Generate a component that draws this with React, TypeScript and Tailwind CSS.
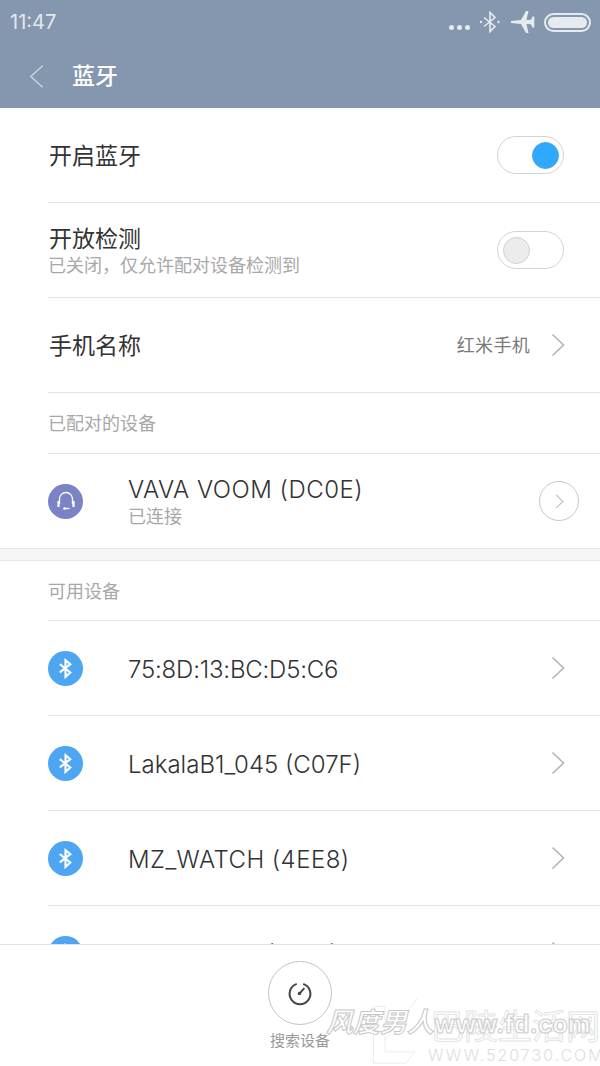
import React from 'react';

const font = "font-['Inter','Noto_Sans_CJK_SC',sans-serif]";

const BluetoothGlyph = ({ className }: { className?: string }) => (
  <svg viewBox="0 0 24 24" fill="none" stroke="currentColor" strokeWidth="2.4" className={className}>
    <path d="M5.5 7 17.5 16.5 12 21.5V2.5L17.5 7 5.5 16.5" />
  </svg>
);

const Toggle = ({ on }: { on?: boolean }) => (
  <div className={`flex h-[38px] w-[67px] items-center rounded-full border border-[#d4d4d4] bg-white ${on ? 'justify-end pr-[4px]' : 'justify-start pl-[5px]'}`}>
    {on ? (
      <div className="size-[27px] rounded-full bg-[#2fa9fb] border border-[#46a6e6]" />
    ) : (
      <div className="size-[27px] rounded-full bg-[#ececec] border border-[#d0d0d0]" />
    )}
  </div>
);

const Arrow = () => (
  <svg viewBox="0 0 14 24" fill="none" stroke="#b4b4b4" strokeWidth="1.6" className="w-[14px] h-[24px]">
    <path d="M1.5 1.5 12.5 12 1.5 22.5" />
  </svg>
);

const SectionTitle = ({ title, className }: { title: string; className: string }) => (
  <div className={`${className} flex items-center ml-[48px] border-b border-[#e3e3e3] text-[18px] text-[#a8a8a8]`}>{title}</div>
);

const DeviceRow = ({ name, tracking }: { name: string; tracking?: string }) => (
  <div className="ml-[48px] h-[95px] shrink-0 flex items-center border-b border-[#e3e3e3] pr-[35px]">
    <div className="size-[35px] rounded-full bg-[#4ea6f3] flex items-center justify-center text-white">
      <BluetoothGlyph className="w-[21px] h-[21px]" />
    </div>
    <div className={`ml-[45px] flex-1 pt-[3px] text-[24px] font-light text-[#333333] ${tracking ?? ''}`}>{name}</div>
    <Arrow />
  </div>
);

export default function App() {
  return (
    <div className={`${font} w-[600px] h-[1066px] bg-white flex flex-col overflow-hidden relative`}>
      {/* status + title bar */}
      <div className="h-[108px] shrink-0 bg-[#8497ae] flex flex-col">
        <div className="h-[44px] flex items-center justify-between pl-[10px] pr-[9px]">
          <span className="text-[20px] text-[#e3e8ee]">11:47</span>
          <div className="flex items-center text-[#e6ebf0]">
            <div className="flex gap-[3px] mt-[10px] mr-[8px]">
              <span className="size-[5px] rounded-full bg-current" />
              <span className="size-[5px] rounded-full bg-current" />
              <span className="size-[5px] rounded-full bg-current" />
            </div>
            <svg viewBox="0 0 24 24" fill="none" stroke="currentColor" strokeWidth="1.6" className="w-[24px] h-[26px] mr-[9px]">
              <path d="M6 7.5 17 16.5 12 21.5V2.5l5 5L6 16.5" />
              <circle cx="3" cy="12" r="1.2" fill="currentColor" stroke="none" />
              <circle cx="20.5" cy="12" r="1.2" fill="currentColor" stroke="none" />
            </svg>
            <svg viewBox="0 0 24 24" fill="currentColor" className="w-[24px] h-[24px] mr-[9px]">
              <path d="M0 11 10 10 15 1h2.500L15.500 10l4.500-.2L21.500 6.500h1.800v11h-1.800L20 14.200 15.500 14l2 9H15l-5-9L0 13z" />
            </svg>
            <div className="w-[47px] h-[19px] rounded-full border-2 border-[#e6ebf0] p-[2px]">
              <div className="w-full h-full rounded-full bg-[#e6ebf0]" />
            </div>
          </div>
        </div>
        <div className="flex-1 flex items-center pl-[29px] pt-[1px]">
          <svg viewBox="0 0 16 26" fill="none" stroke="#c9d2dc" strokeWidth="1.6" className="w-[15px] h-[25px]">
            <path d="M14.5 1.5 2 13l12.5 11.5" />
          </svg>
          <span className="ml-[28px] text-[23px] font-medium text-white">蓝牙</span>
        </div>
      </div>

      {/* settings list */}
      <div className="flex-1 min-h-0 overflow-hidden">
        <div className="ml-[48px] h-[95px] flex items-center justify-between border-b border-[#e3e3e3] pr-[36px]">
          <span className="text-[23px] text-[#333333] pl-px pt-[2px]">开启蓝牙</span>
          <Toggle on />
        </div>
        <div className="ml-[48px] h-[95px] flex items-center justify-between border-b border-[#e3e3e3] pr-[36px]">
          <div className="flex flex-col pt-[2px]">
            <span className="text-[23px] leading-[30px] text-[#333333] pl-px">开放检测</span>
            <span className="text-[18px] leading-[24px] text-[#a8a8a8]">已关闭，仅允许配对设备检测到</span>
          </div>
          <Toggle />
        </div>
        <div className="ml-[48px] h-[95px] flex items-center border-b border-[#e3e3e3] pr-[35px]">
          <span className="flex-1 text-[23px] text-[#333333] pl-px pt-[2px]">手机名称</span>
          <span className="text-[18px] tracking-[0.3px] text-[#7a7a7a] mr-[21px]">红米手机</span>
          <Arrow />
        </div>

        <SectionTitle title="已配对的设备" className="h-[61px]" />
        <div className="ml-[48px] h-[94px] flex items-center pr-[21px]">
          <div className="size-[35px] rounded-full bg-[#7b83c6] flex items-center justify-center text-white">
            <svg viewBox="0 0 24 24" fill="none" stroke="currentColor" strokeWidth="1.3" className="w-[24px] h-[24px]">
              <path d="M5.500 15V10a6.500 6.500 0 0 1 13 0v5" />
              <path d="M4.500 12v6M19.500 12v6" strokeWidth="2.200" />
              <path d="M10.500 19.500h5" />
              <circle cx="10.500" cy="19.500" r="1.300" fill="currentColor" stroke="none" />
            </svg>
          </div>
          <div className="ml-[45px] flex-1 flex flex-col pt-[2px]">
            <span className="text-[24px] leading-[30px] font-light tracking-[0.5px] text-[#333333]">VAVA VOOM (DC0E)</span>
            <span className="text-[18px] leading-[24px] text-[#a8a8a8]">已连接</span>
          </div>
          <div className="size-[40px] rounded-full border border-[#c8c8c8] flex items-center justify-center">
            <svg viewBox="0 0 14 24" fill="none" stroke="#c0c0c0" strokeWidth="1.8" className="w-[9px] h-[15px]">
              <path d="M1.500 1.500 12.500 12 1.500 22.500" />
            </svg>
          </div>
        </div>
        <div className="h-[13px] bg-[#f6f6f6] border-y border-[#e8e8e8]" />
        <SectionTitle title="可用设备" className="h-[60px] pt-[2px]" />
        <DeviceRow name="75:8D:13:BC:D5:C6" tracking="tracking-[-0.2px]" />
        <DeviceRow name="LakalaB1_045 (C07F)" />
        <DeviceRow name="MZ_WATCH (4EE8)" tracking="tracking-[0.45px]" />
        <DeviceRow name="MI_BAND_2 (A1B2)" />
      </div>

      {/* search footer */}
      <div className="h-[122px] shrink-0 bg-white border-t border-[#e2e2e2] flex flex-col items-center pt-[16px]">
        <div className="size-[64px] rounded-full border border-[#c4c4c4] flex items-center justify-center text-[#444444]">
          <svg viewBox="0 0 24 24" fill="none" stroke="currentColor" strokeWidth="1.8" className="w-[26px] h-[26px]">
            <path d="M15 3.6A9.6 9.6 0 1 1 9 3.6" />
            <path d="M11.500 12.500 16 7.500" />
            <circle cx="11.500" cy="12.500" r="1.600" fill="currentColor" stroke="none" />
          </svg>
        </div>
        <span className="mt-[5px] text-[15px] text-[#999999]">搜索设备</span>
      </div>

      {/* watermark */}
      <svg viewBox="0 0 60 76" fill="none" stroke="#ececec" strokeWidth="1" className="absolute left-[370px] top-[995px] w-[60px] h-[72px]">
        <path d="M2 12v60h34l10-12H14V12zM14 48 48 4" />
      </svg>
      <div className="absolute left-[430px] top-[1010px] text-[34px] leading-none whitespace-nowrap text-transparent [-webkit-text-stroke:1px_#e4e4e4]">巴陵生活网</div>
      <div className="absolute left-[326px] top-[1009px] text-[27px] leading-none italic font-bold whitespace-nowrap text-white/80 [-webkit-text-stroke:1px_#c8c8c8]">风度男人</div>
      <div className="absolute left-[434px] top-[1012px] text-[25px] leading-none font-bold whitespace-nowrap text-white/60 [-webkit-text-stroke:1px_#cccccc]">www.fd.com</div>
      <div className="absolute left-[428px] top-[1047px] text-[16px] leading-none tracking-[2px] font-light whitespace-nowrap text-[#dedede]">WWW.520730.COM</div>
    </div>
  );
}
